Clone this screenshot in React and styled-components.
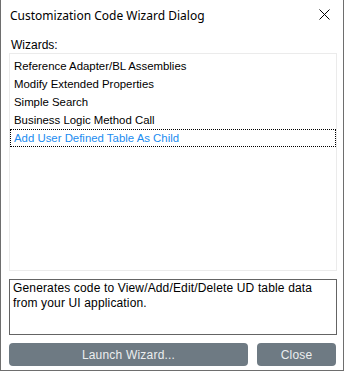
import React, { useState } from 'react';
import styled, { createGlobalStyle } from 'styled-components';

const GlobalStyle = createGlobalStyle`
  html, body {
    margin: 0;
    padding: 0;
    background: #ffffff;
  }
`;

const wizards = [
  'Reference Adapter/BL Assemblies',
  'Modify Extended Properties',
  'Simple Search',
  'Business Logic Method Call',
  'Add User Defined Table As Child',
];

const Dialog = styled.div`
  width: 342px;
  height: 370px;
  background: #fff;
  border: 1px solid #6e6e6e;
  border-top: none;
  display: flex;
  flex-direction: column;
  font-family: 'Liberation Sans', Arial, sans-serif;
  color: #000;
`;

const TitleBar = styled.div`
  height: 32px;
  display: flex;
  align-items: center;
  justify-content: space-between;
  padding: 0 13px 0 9px;
  flex-shrink: 0;
`;

const Title = styled.span`
  font-family: 'Noto Sans', 'Segoe UI', sans-serif;
  font-size: 12px;
  color: #000;
  margin-top: -1px;
`;

const CloseIcon = styled.svg`
  width: 11px;
  height: 11px;
  margin-top: -3px;
`;

const Body = styled.div`
  flex: 1;
  display: flex;
  flex-direction: column;
  padding: 0 6px 3px 8px;
`;

const Label = styled.div`
  font-size: 12px;
  line-height: 14px;
  padding-left: 2px;
  margin-top: 6px;
  margin-bottom: 1px;
`;

const ListBox = styled.ul`
  list-style: none;
  margin: 0;
  padding: 3px 0 0;
  height: 218px;
  box-sizing: border-box;
  border: 1px solid #ebebeb;
`;

const Item = styled.li`
  height: 18px;
  line-height: 16px;
  font-size: 11.4px;
  padding-left: 3px;
  box-sizing: border-box;
  border: 1px ${(p) => (p.$selected ? 'dotted #000' : 'solid transparent')};
  color: ${(p) => (p.$selected ? '#1b8cf0' : '#000')};
  white-space: nowrap;
  cursor: default;
`;

const Description = styled.div`
  margin-top: 8px;
  height: 56px;
  box-sizing: border-box;
  border: 1px solid #646464;
  padding: 1px 3px;
  font-size: 12px;
  line-height: 15px;
  letter-spacing: 0.15px;
`;

const ButtonRow = styled.div`
  margin-top: 8px;
  display: flex;
  gap: 9px;
`;

const Button = styled.button`
  height: 23px;
  width: ${(p) => p.$width}px;
  border: none;
  border-radius: 4px;
  background: #6e7a83;
  color: #eceeef;
  font-family: 'Liberation Sans', Arial, sans-serif;
  font-size: 12px;
  letter-spacing: 0.2px;
  padding: 0;
  cursor: pointer;
`;

export default function App() {
  const [selected, setSelected] = useState(4);
  return (
    <>
      <GlobalStyle />
      <Dialog>
        <TitleBar>
          <Title>Customization Code Wizard Dialog</Title>
          <CloseIcon viewBox="0 0 11 11">
            <path d="M0.5 0.5 L10.5 10.5 M10.5 0.5 L0.5 10.5" stroke="#000" strokeWidth="1" fill="none" />
          </CloseIcon>
        </TitleBar>
        <Body>
          <Label>Wizards:</Label>
          <ListBox>
            {wizards.map((w, i) => (
              <Item key={w} $selected={i === selected} onClick={() => setSelected(i)}>
                {w}
              </Item>
            ))}
          </ListBox>
          <Description>
            Generates code to View/Add/Edit/Delete UD table data from your UI application.
          </Description>
          <ButtonRow>
            <Button $width={239}>Launch Wizard...</Button>
            <Button $width={79}>Close</Button>
          </ButtonRow>
        </Body>
      </Dialog>
    </>
  );
}
